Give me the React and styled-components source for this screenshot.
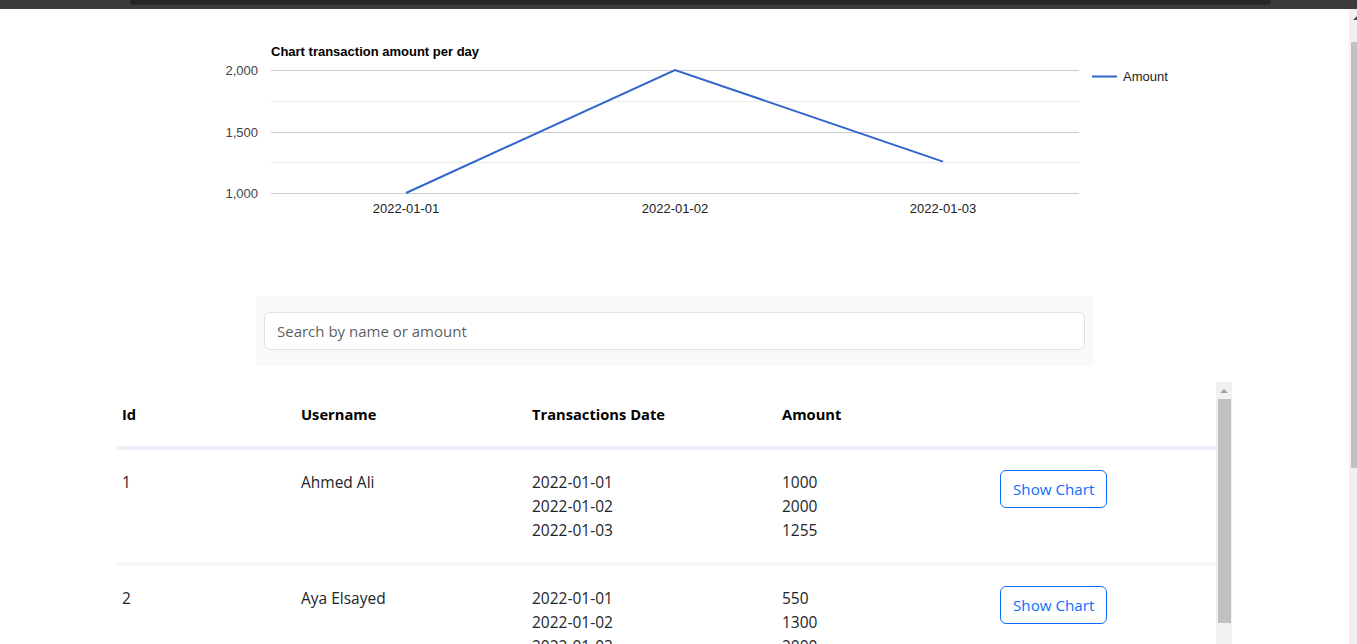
import React from "react";
import styled, { createGlobalStyle } from "styled-components";

const transactions = [
  { id: 1, name: "Ahmed Ali", days: ["2022-01-01", "2022-01-02", "2022-01-03"], amounts: [1000, 2000, 1255] },
  { id: 2, name: "Aya Elsayed", days: ["2022-01-01", "2022-01-02", "2022-01-03"], amounts: [550, 1300, 2000] },
  { id: 3, name: "Mina Adel", days: ["2022-01-01", "2022-01-02", "2022-01-03"], amounts: [500, 1250, 2500] },
];

const GlobalStyle = createGlobalStyle`
  html, body {
    margin: 0;
    height: 100%;
    overflow: hidden;
    background: #fff;
  }
  body {
    font-family: "Open Sans", "Noto Sans", sans-serif;
    color: #212529;
  }
`;

export default function App() {
  const first = transactions[0];

  return (
    <Page>
      <GlobalStyle />
      <TopBar>
        <TopNotch />
      </TopBar>
      <Viewport>
        <Main>
          <ChartBox>
            <LineChart days={first.days} amounts={first.amounts} />
          </ChartBox>

          <SearchPanel>
            <SearchInput placeholder="Search by name or amount" />
          </SearchPanel>

          <TableFrame>
            <TableScroll>
              <Table>
                <colgroup>
                  <col style={{ width: 179 }} />
                  <col style={{ width: 231 }} />
                  <col style={{ width: 250 }} />
                  <col style={{ width: 218 }} />
                  <col />
                </colgroup>
                <thead>
                  <tr>
                    <Th>Id</Th>
                    <Th>Username</Th>
                    <Th>Transactions Date</Th>
                    <Th>Amount</Th>
                    <Th />
                  </tr>
                </thead>
                <tbody>
                  {transactions.map((t) => (
                    <tr key={t.id}>
                      <Td>{t.id}</Td>
                      <Td>{t.name}</Td>
                      <Td>
                        {t.days.map((d) => (
                          <Line key={d}>{d}</Line>
                        ))}
                      </Td>
                      <Td>
                        {t.amounts.map((a, i) => (
                          <Line key={i}>{a}</Line>
                        ))}
                      </Td>
                      <Td>
                        <OutlineButton>Show Chart</OutlineButton>
                      </Td>
                    </tr>
                  ))}
                </tbody>
              </Table>
            </TableScroll>
            <ScrollBar>
              <ArrowBox><UpArrow /></ArrowBox>
              <Thumb $height={224} />
            </ScrollBar>
          </TableFrame>
        </Main>

        <PageScrollbar>
          <PageArrow><UpArrow /></PageArrow>
          <PageThumb $height={426} />
        </PageScrollbar>
      </Viewport>
    </Page>
  );
}

const chartFont = "Liberation Sans, Arial, sans-serif";

// chart drawn in page coordinates (x = page x, y = page y)
function LineChart({ days, amounts }) {
  const left = 271;
  const right = 1079;
  const top = 70;
  const bottom = 193;
  const min = 1000;
  const max = 2000;
  const xs = [406, 675, 943];
  const y = (v) => bottom - ((v - min) / (max - min)) * (bottom - top);
  const points = amounts.map((a, i) => `${xs[i]},${y(a)}`).join(" ");

  return (
    <svg width="1349" height="260" viewBox="0 9 1349 260">
      <text x={left} y="56" fontFamily={chartFont} fontSize="13" fontWeight="bold" fill="#000">
        Chart transaction amount per day
      </text>
      {[101.5, 162.5].map((g) => (
        <line key={g} x1={left} x2={right} y1={g} y2={g} stroke="#ebebeb" strokeWidth="1" />
      ))}
      {[70.5, 132.5, 193.5].map((g) => (
        <line key={g} x1={left} x2={right} y1={g} y2={g} stroke="#cccccc" strokeWidth="1" />
      ))}
      {[["2,000", 75], ["1,500", 137], ["1,000", 198]].map(([label, ly]) => (
        <text key={label} x="258" y={ly} textAnchor="end" fontFamily={chartFont} fontSize="13" fill="#444">
          {label}
        </text>
      ))}
      {days.map((d, i) => (
        <text key={d} x={xs[i]} y="213" textAnchor="middle" fontFamily={chartFont} fontSize="13" fill="#222">
          {d}
        </text>
      ))}
      <polyline points={points} fill="none" stroke="#3366cc" strokeWidth="2" />
      <line x1="1092" x2="1117" y1="76.5" y2="76.5" stroke="#3366cc" strokeWidth="2" />
      <text x="1123" y="81" fontFamily={chartFont} fontSize="13" fill="#222">
        Amount
      </text>
    </svg>
  );
}

const Page = styled.div`
  height: 100vh;
  display: flex;
  flex-direction: column;
  overflow: hidden;
`;

const TopBar = styled.div`
  flex: 0 0 9px;
  background: #3b3b3b;
  display: flex;
`;

const TopNotch = styled.div`
  margin-left: 130px;
  width: 1141px;
  height: 4px;
  background: #262626;
  border-radius: 0 0 4px 4px;
  box-shadow: 0 1px 1px rgba(0, 0, 0, 0.3);
`;

const Viewport = styled.div`
  flex: 1;
  min-height: 0;
  display: flex;
`;

const Main = styled.main`
  flex: 1;
  min-width: 0;
  overflow: hidden;
  display: flex;
  flex-direction: column;
  align-items: center;
`;

const ChartBox = styled.div`
  width: 1349px;
  height: 260px;
  svg {
    display: block;
  }
`;

const SearchPanel = styled.div`
  margin-top: 27px;
  width: 837px;
  box-sizing: border-box;
  padding: 16px 8px;
  background: #f8f9fa;
`;

const SearchInput = styled.input`
  display: block;
  width: 100%;
  box-sizing: border-box;
  height: 38px;
  padding: 6px 12px;
  font: 400 15px/24px "Open Sans", "Noto Sans", sans-serif;
  color: #212529;
  background: #fff;
  border: 1px solid #dee2e6;
  border-radius: 6px;
  outline: none;

  &::placeholder {
    color: rgba(33, 37, 41, 0.75);
  }
`;

const TableFrame = styled.div`
  margin-top: 16px;
  width: 1115px;
  height: 300px;
  flex-shrink: 0;
  display: flex;
`;

const TableScroll = styled.div`
  flex: 1;
  overflow: hidden;
`;

const Table = styled.table`
  width: 100%;
  border-collapse: collapse;
  table-layout: fixed;
  font-size: 15.5px;
  line-height: 24px;
`;

const Th = styled.th`
  text-align: left;
  font-weight: 700;
  font-size: 14.7px;
  line-height: 24px;
  padding: 20px 5px;
  border-bottom: 4px solid #ecedf9;
  color: #000;
`;

const Td = styled.td`
  vertical-align: top;
  padding: 20px 5px;
  border-bottom: 4px solid #f6f7fa;
`;

const Line = styled.div`
  line-height: 24px;
`;

const OutlineButton = styled.button`
  font: 400 15.2px/24px "Open Sans", "Noto Sans", sans-serif;
  color: #0d6efd;
  background: transparent;
  border: 1px solid #0d6efd;
  border-radius: 6px;
  padding: 6px 12px;
  cursor: pointer;
`;

const ScrollBar = styled.div`
  width: 16px;
  background: #f1f1f1;
  display: flex;
  flex-direction: column;
`;

const ArrowBox = styled.div`
  height: 17px;
  display: flex;
  align-items: center;
  justify-content: center;
`;

const UpArrow = styled.span`
  width: 0;
  height: 0;
  border-left: 4px solid transparent;
  border-right: 4px solid transparent;
  border-bottom: 4px solid #a3a3a3;
`;

const Thumb = styled.div`
  height: ${(p) => p.$height}px;
  margin: 0 1px 0 2px;
  background: #c1c1c1;
`;

const PageScrollbar = styled.div`
  width: 8px;
  background: #f1f1f1;
  overflow: hidden;
  display: flex;
  flex-direction: column;
`;

const PageArrow = styled.div`
  height: 17px;
  width: 17px;
  display: flex;
  align-items: center;
  justify-content: center;
  margin-left: -1px;
  span {
    border-bottom-color: #505050;
  }
`;

const PageThumb = styled.div`
  height: ${(p) => p.$height}px;
  margin-left: 2px;
  width: 13px;
  background: #c1c1c1;
  margin-top: 16px;
`;
